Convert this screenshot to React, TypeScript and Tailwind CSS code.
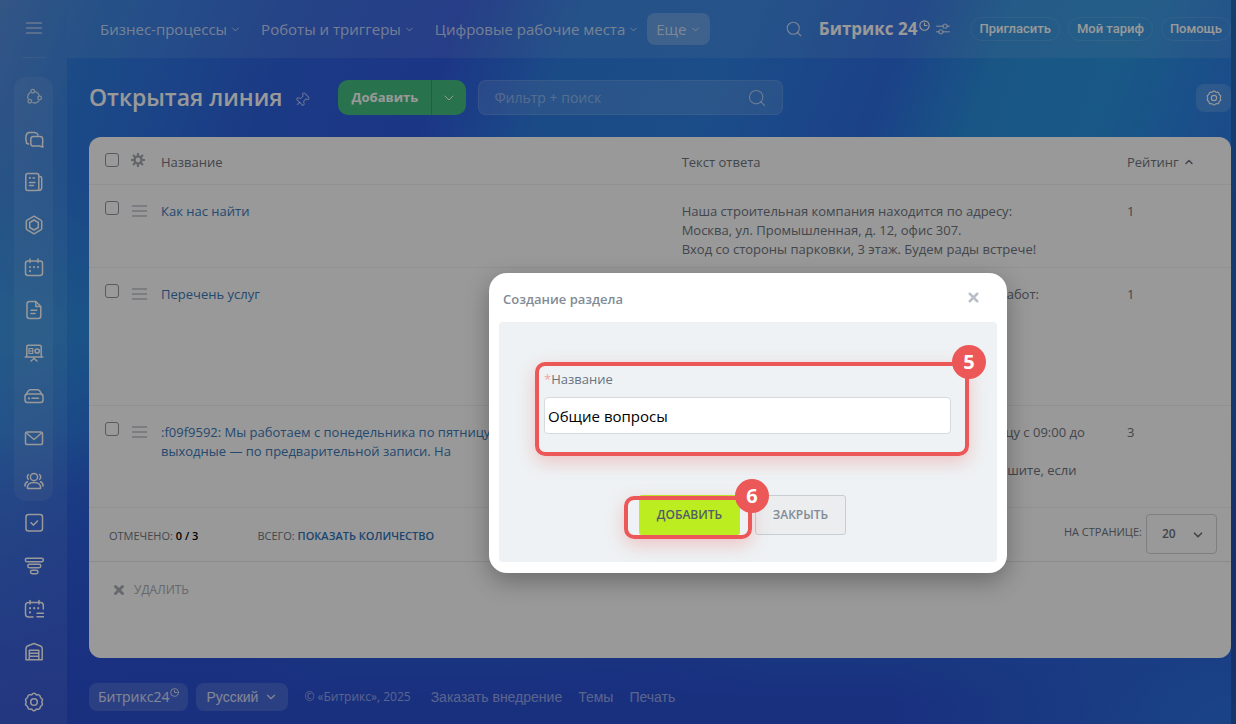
import { useState } from 'react'
import type { ReactNode } from 'react'
import { ChevronDown, ChevronUp, Pin, Search, X } from 'lucide-react'

interface Row {
  title: string[]
  answer: string[]
  rating: number
  height: string
}

const rows: Row[] = [
  {
    title: ['Как нас найти'],
    answer: [
      'Наша строительная компания находится по адресу:',
      'Москва, ул. Промышленная, д. 12, офис 307.',
      'Вход со стороны парковки, 3 этаж. Будем рады встрече!',
    ],
    rating: 1,
    height: 'h-[83px]',
  },
  {
    title: ['Перечень услуг'],
    answer: [
      'Бюро выполняет следующие виды строительных работ:',
      '– фундамент',
      '– кровля',
      '– фасад',
      '– отделка',
    ],
    rating: 1,
    height: 'h-[138px]',
  },
  {
    title: [
      ':f09f9592: Мы работаем с понедельника по пятницу с 09:00',
      'выходные — по предварительной записи. На',
    ],
    answer: [
      'Наш отдел: мы работаем с понедельника по пятницу с 09:00 до',
      '18:00.',
      'В выходные дни — по записи. Позвоните или напишите, если',
    ],
    rating: 3,
    height: 'h-[102px]',
  },
]

const navItems = ['Бизнес-процессы', 'Роботы и триггеры', 'Цифровые рабочие места']

function Icon({ children, size = 20, width = 1.5 }: { children: ReactNode; size?: number; width?: number }) {
  return (
    <svg
      width={size}
      height={size}
      viewBox="0 0 20 20"
      fill="none"
      stroke="currentColor"
      strokeWidth={width}
      strokeLinecap="round"
      strokeLinejoin="round"
      aria-hidden="true"
    >
      {children}
    </svg>
  )
}

const gearOutline =
  'M10 1.300Q11.200 1.200 12 2.500Q12.400 3.100 13.500 2.800Q15.800 2.300 16.200 4.600Q16.200 5.700 17.100 6.200Q19.200 7.300 18.100 9Q17.500 10 18.100 11Q19.200 12.700 17.100 13.800Q16.200 14.300 16.200 15.400Q15.800 17.700 13.500 17.200Q12.400 16.900 12 17.500Q10 20 8 17.500Q7.600 16.900 6.500 17.200Q4.200 17.700 3.800 15.400Q3.800 14.300 2.900 13.800Q.800 12.700 1.900 11Q2.500 10 1.900 9Q.800 7.300 2.900 6.200Q3.800 5.700 3.800 4.600Q4.200 2.300 6.500 2.800Q7.600 3.100 8 2.500Q8.800 1.200 10 1.300z'

function GearIcon({ size = 20 }: { size?: number }) {
  return (
    <Icon size={size}>
      <path d={gearOutline} />
      <circle cx="10" cy="10" r="3.300" />
    </Icon>
  )
}

function ClockIcon({ size }: { size: number }) {
  return (
    <Icon size={size} width={2}>
      <circle cx="10" cy="10" r="8.500" />
      <path d="M10 5.500V10h4.500" />
    </Icon>
  )
}

const groupIcons: { label: string; icon: ReactNode }[] = [
  {
    label: 'Автоматизация',
    icon: (
      <g opacity=".75" strokeWidth="1.3">
        <circle cx="8.700" cy="4.200" r="1.800" />
        <circle cx="5.800" cy="14.200" r="1.800" />
        <circle cx="15.600" cy="11" r="1.800" />
        <path d="M6 5.500C3.800 7.200 3.300 9.300 4 11.500M11.500 4.600c2 .7 3.200 2 3.700 3.800M14.800 13.900c-1.400 1.800-3.800 2.500-6 1.700" />
      </g>
    ),
  },
  {
    label: 'Чаты',
    icon: (
      <>
        <path d="M4.500 14L2.400 13.200c.4-1 .1-1.700-.3-2.500-.3-1-.3-3.600 0-5C2.500 3.900 3.500 2.700 5.200 2.500h5.600c1.700.2 2.800 1 3.200 2.500" />
        <path d="M9.500 6.500h6.500c1.700 0 2.700 1 2.700 2.700v3c0 1.200-.3 1.800-.3 2.500.1.800.4 1.300.6 2.300-1.200 0-2-.4-3-.9H9.500c-1.700 0-2.700-1-2.700-2.700V9.200c0-1.700 1-2.700 2.700-2.700z" />
      </>
    ),
  },
  {
    label: 'Лента',
    icon: (
      <>
        <rect x="1.800" y="1.500" width="13" height="17" rx="2" />
        <path d="M15 4.500h1c1 0 1.700.7 1.700 1.700v9.600c0 1.600-1 2.700-2.700 2.700M5.500 10.500h5.500M5.500 13.500h4M9 6h1.500" />
        <rect x="5" y="5" width="1.800" height="1.800" fill="currentColor" stroke="none" />
      </>
    ),
  },
  {
    label: 'CRM',
    icon: (
      <>
        <path d="M10 1.200l6.800 3.900c.6.300.9.700.9 1.400v7c0 .7-.3 1.100-.9 1.400L10 18.800l-6.800-3.900c-.6-.3-.9-.7-.9-1.400v-7c0-.7.3-1.100.9-1.400z" />
        <path d="M10 5l4.300 2.500v5L10 15l-4.300-2.500v-5z" />
      </>
    ),
  },
  {
    label: 'Календарь',
    icon: (
      <>
        <rect x="1.500" y="3" width="17" height="14.500" rx="2.500" />
        <path d="M6 1v3.500M14 1v3.500" />
        <path d="M6 9v.1M10 9v.1M14 9v.1M6 13v.1" strokeWidth="2.200" />
      </>
    ),
  },
  {
    label: 'Документы',
    icon: (
      <>
        <path d="M5.500 1.500h6.300L16.800 6.500v9.500c0 1.500-1 2.500-2.500 2.500H5.500C4 18.500 3 17.500 3 16V4c0-1.500 1-2.500 2.500-2.500z" />
        <path d="M11.800 1.800v4.700h4.700M7 10.300h5.800M7 13.500h4" />
      </>
    ),
  },
  {
    label: 'Доски',
    icon: (
      <>
        <path d="M2.800 13.500V3.500c0-.9.4-1.300 1.300-1.300h11.800c.9 0 1.300.4 1.300 1.300v10M1.200 14h17.600M10 14v1.500M7 18l3-2.500 3 2.500" />
        <path d="M5 5.500h3.800v5H5zM5 8h3.800" strokeWidth="1.200" />
        <circle cx="13.200" cy="8" r="2.100" />
      </>
    ),
  },
  {
    label: 'Диск',
    icon: (
      <>
        <rect x="1" y="8" width="18" height="8.500" rx="2.500" />
        <path d="M2 8.700l2.300-3.800c.5-.9 1.200-1.200 2-1.200h7.400c.9 0 1.500.4 2 1.200L18 8.700M8 12.300h6.500" />
        <path d="M5 12.300v.1" strokeWidth="2.200" />
      </>
    ),
  },
  {
    label: 'Почта',
    icon: (
      <>
        <rect x="1.500" y="4" width="17" height="12.500" rx="1.800" />
        <path d="M3 5.500l7 6 7-6" />
      </>
    ),
  },
  {
    label: 'Группы',
    icon: (
      <>
        <circle cx="10" cy="6" r="3.600" />
        <path d="M3.500 17.500c-.6-4 2-6 6.500-6s7.100 2 6.500 6zM4.500 3.500c-1.500 1.200-1.600 3.500-.2 4.800M15.500 3.500c1.500 1.200 1.600 3.500.2 4.800M3.500 10.800C1.800 11.500.9 13 1 15M16.500 10.800c1.700.7 2.600 2.200 2.500 4.200" />
      </>
    ),
  },
]

const extraIcons: { label: string; icon: ReactNode }[] = [
  {
    label: 'Задачи',
    icon: (
      <>
        <rect x="2" y="1.500" width="16.500" height="16.500" rx="2.500" />
        <path d="M7 9.800l2.500 2.300L13.500 8" />
      </>
    ),
  },
  {
    label: 'Воронка',
    icon: (
      <>
        <rect x="1.300" y="2.300" width="18" height="3.500" rx="1.700" />
        <rect x="3.800" y="8.300" width="13" height="3.500" rx="1.700" />
        <rect x="6.500" y="14.300" width="7.500" height="3.500" rx="1.700" />
      </>
    ),
  },
  {
    label: 'Бронирование',
    icon: (
      <>
        <path d="M9 18H4.500C2.500 18 1.500 17 1.500 15V6.500c0-2 1-3 3-3h12c1.800 0 2.800 1 2.800 3V10M6 1.500V5M15 1.500V5M13 14.300h7M13 17.700h7" />
        <path d="M6 9.200v.1M10.200 9.200v.1M14.200 9.200v.1M6 13.300v.1" strokeWidth="2.200" />
      </>
    ),
  },
  {
    label: 'Склад',
    icon: (
      <>
        <path d="M2 17.800V6.500C2 5 2.500 4.500 3.500 4L10 1.500 16.500 4c1 .5 1.700 1 1.700 2.500v11.300z" />
        <path d="M5.300 17.500V8.300h9.500v9.200M5.300 11.200h9.500M5.300 14.300h9.500" />
      </>
    ),
  },
]

function SideLink({ label, icon }: { label: string; icon: ReactNode }) {
  return (
    <a href="#" aria-label={label} className="block size-5">
      <Icon>{icon}</Icon>
    </a>
  )
}

function Sidebar() {
  return (
    <aside className="flex w-[67px] shrink-0 flex-col items-center bg-white/8 text-white">
      <button type="button" aria-label="Меню" className="mt-[18px] size-5 text-white/80">
        <Icon>
          <path d="M2.500 5h15M2.500 10h15M2.500 15h15" strokeWidth="1.200" />
        </Icon>
      </button>
      <div className="mt-[19px] h-px w-6 bg-white/12" />
      <nav className="mt-[19px] flex h-[424px] w-[39px] flex-col items-center justify-between rounded-xl bg-white/8 py-[10px]">
        {groupIcons.map((item) => (
          <SideLink key={item.label} {...item} />
        ))}
      </nav>
      <nav className="mt-3 flex flex-col gap-[23px]">
        {extraIcons.map((item) => (
          <SideLink key={item.label} {...item} />
        ))}
      </nav>
      <button type="button" aria-label="Настройки" className="mt-auto mb-3 size-5">
        <GearIcon />
      </button>
    </aside>
  )
}

function Header() {
  return (
    <header className="flex h-[58px] items-center justify-between bg-white/9 pl-[33px]">
      <nav className="flex items-center gap-5 text-[15px] whitespace-nowrap text-white/70">
        {navItems.map((item) => (
          <a key={item} href="#" className="flex items-center gap-[3px]">
            {item}
            <ChevronDown size={11} />
          </a>
        ))}
        <button type="button" className="-ml-3 flex h-8 items-center gap-1 rounded-lg bg-white/22 px-[9px]">
          Еще
          <ChevronDown size={11} />
        </button>
      </nav>
      <div className="flex items-center whitespace-nowrap text-white">
        <button type="button" aria-label="Поиск" className="mr-4 text-white/70">
          <Search size={18} strokeWidth={1.5} />
        </button>
        <a href="#" className="flex items-center text-[17px] font-bold">
          Битрикс 24
          <span className="mb-2 ml-[2px]">
            <ClockIcon size={11} />
          </span>
        </a>
        <button type="button" aria-label="Настроить меню" className="mr-5 ml-[6px] text-white/60">
          <Icon size={14} width={2}>
            <path d="M1 6h9M16 6h3M1 14h3M10 14h9" />
            <circle cx="13" cy="6" r="2.800" />
            <circle cx="7" cy="14" r="2.800" />
          </Icon>
        </button>
        <div className="flex gap-2 font-['Roboto',sans-serif] text-[13px] font-medium">
          <button type="button" className="h-6 rounded-full border border-white/10 px-2">Пригласить</button>
          <button type="button" className="h-6 rounded-full border border-white/10 px-2">Мой тариф</button>
          <button type="button" className="h-6 rounded-full border border-white/10 px-2">Помощь</button>
        </div>
      </div>
    </header>
  )
}

function Toolbar() {
  return (
    <div className="flex h-[79px] items-center pl-[22px]">
      <h1 className="text-[23px] font-semibold whitespace-nowrap text-white">Открытая линия</h1>
      <button type="button" aria-label="Закрепить" className="mr-7 ml-3 pt-1 text-white/60">
        <Pin size={16} className="rotate-45" strokeWidth={1.5} />
      </button>
      <div className="mr-3 flex h-[35px] overflow-hidden rounded-[10px] bg-[#44be80] text-white">
        <button type="button" className="w-[93px] text-[13px] font-bold">Добавить</button>
        <button type="button" aria-label="Другие действия" className="flex w-[35px] items-center justify-center border-l border-black/15">
          <ChevronDown size={16} strokeWidth={1.500} />
        </button>
      </div>
      <div className="flex h-[35px] w-[305px] items-center rounded-lg border border-white/12 bg-white/12 px-[15px] text-white/60">
        <input
          type="text"
          aria-label="Фильтр + поиск"
          placeholder="Фильтр + поиск"
          className="min-w-0 flex-1 bg-transparent text-sm outline-none placeholder:text-white/40"
        />
        <Search size={20} strokeWidth={1.300} />
      </div>
      <button type="button" aria-label="Настройки списка" className="ml-auto flex h-7 w-[35px] items-center justify-center rounded-lg bg-white/15 text-white">
        <GearIcon size={16} />
      </button>
    </div>
  )
}

function Checkbox({ label }: { label: string }) {
  return (
    <input
      type="checkbox"
      aria-label={label}
      className="block size-[14px] appearance-none rounded-[3px] border border-[#8f949b] bg-white"
    />
  )
}

function Grid() {
  return (
    <section className="ml-[22px] rounded-xl bg-white text-[13px] text-[#6f7580]">
      <table className="w-full table-fixed text-left">
        <colgroup>
          <col className="w-[39px]" />
          <col className="w-[33px]" />
          <col />
          <col className="w-[39%]" />
          <col className="w-[104px]" />
        </colgroup>
        <thead>
          <tr className="h-[47px] border-b border-[#f1f2f4]">
            <th className="pl-4">
              <Checkbox label="Выбрать все" />
            </th>
            <th className="pl-[3px]">
              <svg width="14" height="14" viewBox="0 0 14 14" className="text-[#a3a8ae]" aria-hidden="true">
                <circle cx="7" cy="7" r="3.600" fill="none" stroke="currentColor" strokeWidth="2.400" />
                <path d="M7 0v2.500M7 11.500V14M0 7h2.500M11.500 7H14M2 2l1.800 1.800M10.200 10.200L12 12M12 2l-1.800 1.800M3.800 10.200L2 12" stroke="currentColor" strokeWidth="2" />
              </svg>
            </th>
            <th className="pt-1 font-normal">Название</th>
            <th className="pt-1 font-normal">Текст ответа</th>
            <th className="pt-1 font-normal">
              <span className="flex items-center gap-1">
                Рейтинг
                <ChevronUp size={12} strokeWidth={3} />
              </span>
            </th>
          </tr>
        </thead>
        <tbody>
          {rows.map((row) => (
            <tr key={row.title[0]} className={`${row.height} border-b border-[#f1f2f4] align-top leading-[19px]`}>
              <td className="pt-4 pl-4">
                <Checkbox label={row.title[0]} />
              </td>
              <td className="pt-5 pl-1">
                <span className="flex w-[15px] flex-col gap-[3px]">
                  <span className="h-[2px] bg-[#cdd1d5]" />
                  <span className="h-[2px] bg-[#cdd1d5]" />
                  <span className="h-[2px] bg-[#cdd1d5]" />
                </span>
              </td>
              <td className="pt-[17px] whitespace-nowrap">
                <a href="#" className="text-[#3d7ab8]">
                  {row.title.map((line) => (
                    <span key={line} className="block">{line}</span>
                  ))}
                </a>
              </td>
              <td className="pt-[17px] whitespace-nowrap">
                {row.answer.map((line) => (
                  <span key={line} className="block">{line}</span>
                ))}
              </td>
              <td className="pt-[17px]">{row.rating}</td>
            </tr>
          ))}
        </tbody>
      </table>

      <div className="flex h-[54px] items-center border-b border-[#e6e8ea] pr-[14px] pl-5 text-[11px]">
        <span className="pt-1">
          ОТМЕЧЕНО: <b className="font-semibold text-black">0 / 3</b>
        </span>
        <span className="ml-[59px] pt-1">
          ВСЕГО: <a href="#" className="font-semibold text-[#2f74b8]">ПОКАЗАТЬ КОЛИЧЕСТВО</a>
        </span>
        <label htmlFor="page-size" className="mr-1 ml-auto pb-1">НА СТРАНИЦЕ:</label>
        <div className="relative">
          <select
            id="page-size"
            defaultValue="20"
            className="h-10 w-[71px] appearance-none rounded border border-[#d0d4d8] bg-white pl-[15px] text-xs font-semibold text-[#6f7580]"
          >
            <option>20</option>
            <option>50</option>
          </select>
          <ChevronDown size={14} strokeWidth={3} className="pointer-events-none absolute top-[14px] right-3" />
        </div>
      </div>
      <div className="flex h-24 items-start pt-5 pl-[23px] text-xs text-[#a8adb4]">
        <button type="button" disabled className="flex items-center gap-2">
          <X size={14} strokeWidth={5} />
          УДАЛИТЬ
        </button>
      </div>
    </section>
  )
}

function Footer() {
  return (
    <footer className="flex items-center pt-[25px] pb-3 pl-[22px] text-sm whitespace-nowrap text-white/50">
      <a href="#" className="flex h-7 items-center rounded-lg bg-white/14 px-[9px] text-white/80">
        Битрикс24
        <span className="mb-2 ml-px">
          <ClockIcon size={9} />
        </span>
      </a>
      <button type="button" className="mr-4 ml-2 flex h-7 items-center gap-[6px] rounded-lg bg-white/14 px-[10px] font-['Liberation_Sans',sans-serif] text-white/80">
        Русский
        <ChevronDown size={14} />
      </button>
      <span className="text-xs">© «Битрикс», 2025</span>
      <nav className="ml-5 flex gap-4 font-['Liberation_Sans',sans-serif]">
        <a href="#">Заказать внедрение</a>
        <a href="#">Темы</a>
        <a href="#">Печать</a>
      </nav>
    </footer>
  )
}

function StepFrame({ step, className }: { step: number; className: string }) {
  return (
    <div
      className={`pointer-events-none absolute rounded-[10px] border-4 border-[#ec5858] shadow-[0_6px_18px_rgba(236,88,88,0.3)] ${className}`}
    >
      <span className="absolute -top-[21px] -right-[21px] flex size-[34px] items-center justify-center rounded-full bg-[#ec5858] text-xl font-bold text-white">
        {step}
      </span>
    </div>
  )
}

function CreateSectionDialog() {
  const [name, setName] = useState('Общие вопросы')

  return (
    <div
      role="dialog"
      aria-labelledby="dialog-title"
      className="absolute top-[273px] left-[489px] w-[518px] rounded-[18px] bg-white px-[10px] pb-[11px] shadow-[0_8px_24px_rgba(0,0,0,0.3)]"
    >
      <div className="flex h-[49px] items-center justify-between pr-4 pl-1">
        <h2 id="dialog-title" className="pt-1 text-[13px] font-semibold text-[#828b95]">Создание раздела</h2>
        <button type="button" aria-label="Закрыть окно" className="text-[#b9bfc6]">
          <X size={15} strokeWidth={4} />
        </button>
      </div>
      <form className="rounded bg-[#eef2f4] pt-10 pr-7 pb-[27px] pl-9" onSubmit={(e) => e.preventDefault()}>
        <div className="relative pt-2 pr-[18px] pb-[22px] pl-[9px]">
          <label htmlFor="section-name" className="block text-[13px] leading-[19px] text-[#6a737f]">
            <span className="text-[#f0a5a5]">*</span>Название
          </label>
          <input
            id="section-name"
            type="text"
            value={name}
            onChange={(e) => setName(e.target.value)}
            className="mt-2 block h-[37px] w-full rounded border border-[#d5dade] bg-white px-[3px] text-[15px] text-black outline-none"
          />
          <StepFrame step={5} className="inset-0" />
        </div>
        <div className="mt-[39px] flex gap-[15px] pl-[104px]">
          <div className="relative">
            <button type="submit" className="h-10 w-[101px] rounded-[3px] bg-[#bbed21] text-xs font-semibold text-[#535c69]">
              ДОБАВИТЬ
            </button>
            <StepFrame step={6} className="top-px -right-3 -bottom-1 -left-[15px]" />
          </div>
          <button type="button" className="h-10 w-[91px] rounded-[3px] border border-[#c6cdd3] bg-[#ebedef] text-xs font-semibold text-[#828b95]">
            ЗАКРЫТЬ
          </button>
        </div>
      </form>
    </div>
  )
}

export default function App() {
  return (
    <div className="relative flex min-h-screen overflow-hidden bg-[radial-gradient(ellipse_at_100%_100%,#2c72e0_0%,transparent_20%),linear-gradient(to_bottom,transparent_60%,#2b50d4_97%),radial-gradient(ellipse_at_0%_45%,#2d8ee2_0%,#2d8ee200_30%),linear-gradient(110deg,#4886dc_0%,#2d7ce0_7%,#2d74e2_12%,#2d62de_20%,#2f5ae0_31%,#2d7ee2_39%,#2d80e4_50%,#2d6ee2_61%,#2a90de_68%,#2a94e0_76%,#2d80e6_84%,#2d6ee0_100%)] font-['Open_Sans','Noto_Sans',sans-serif]">
      <Sidebar />
      <div className="min-w-0 flex-1">
        <Header />
        <Toolbar />
        <Grid />
        <Footer />
      </div>
      <div className="w-[5px] shrink-0 bg-black/20" />
      <div className="absolute inset-0 bg-black/40" />
      <CreateSectionDialog />
    </div>
  )
}
